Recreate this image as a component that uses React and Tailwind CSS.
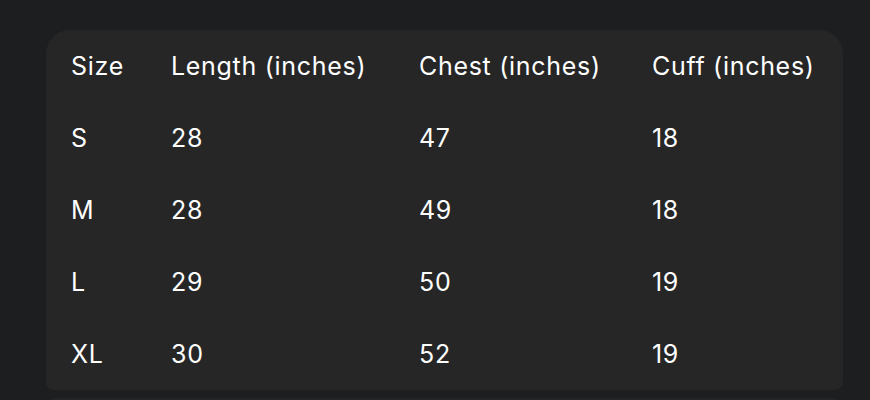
export default function App() {
  const rows = [
    ["S", "28", "47", "18"],
    ["M", "28", "49", "18"],
    ["L", "29", "50", "19"],
    ["XL", "30", "52", "19"],
  ];
  const head = ["Size", "Length (inches)", "Chest (inches)", "Cuff (inches)"];
  const Row = ({ cells }) => (
    <div className="grid h-[72px] grid-cols-[100px_248px_233px_1fr] items-center pl-[25px] pt-[2px]">
      {cells.map((c, i) => (
        <div key={i}>{c}</div>
      ))}
    </div>
  );
  return (
    <div
      className="h-[400px] w-[870px] overflow-hidden bg-[#1d1e20] pt-[30px] text-[25px] tracking-[0.7px] text-white"
      style={{ fontFamily: "Inter, 'Noto Sans', sans-serif" }}
    >
      <div className="ml-[46px] w-[797px] rounded-t-[24px] rounded-b-[8px] bg-[#262626]">
        <Row cells={head} />
        {rows.map((r, i) => (
          <Row key={i} cells={r} />
        ))}
      </div>
      <div className="ml-[48px] mt-[8px] h-[40px] w-[792px] rounded-t-[8px] bg-[#262626]" />
    </div>
  );
}
